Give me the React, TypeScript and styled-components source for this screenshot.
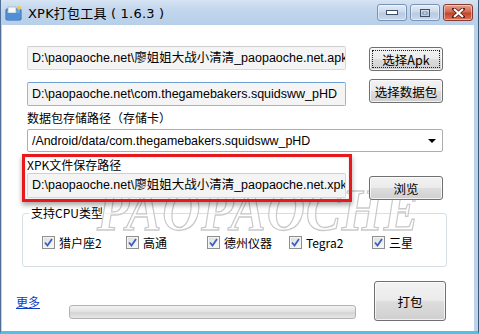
import React from "react";
import styled, { createGlobalStyle } from "styled-components";

const Global = createGlobalStyle`
  html, body { margin: 0; padding: 0; background: #fff; }
  body { width: 479px; height: 334px; overflow: hidden; }
  * { box-sizing: border-box; }
`;

const UI = `"Liberation Sans", "Noto Sans CJK SC", sans-serif`;

const Window = styled.div`
  position: relative;
  width: 479px;
  height: 334px;
  display: flex;
  flex-direction: column;
  background: linear-gradient(#c9dcf0, #b9d1ea 25px, #bcd3ea);
  border-left: 1px solid #4f6f96;
  border-right: 1px solid #3b5878;
  border-bottom: 3px solid #4cc3e6;
  font-family: ${UI};
  color: #000;
`;

const TitleBar = styled.div`
  height: 25px;
  display: flex;
  align-items: center;
  padding: 0 5px 0 4px;
  background: linear-gradient(#d6e4f3, #c2d6ec 40%, #b7cfe9);
`;

const TitleText = styled.span`
  font-family: "DejaVu Sans", "Noto Sans CJK SC", sans-serif;
  font-size: 13px;
  margin-left: 5px;
  flex: 1;
  letter-spacing: 0.2px;
`;

const Caption = styled.div`
  display: flex;
  gap: 3px;
`;

const CapBtn = styled.div<{ $close?: boolean }>`
  width: 30px;
  height: 17px;
  border-radius: 3px;
  border: 1px solid ${(p) => (p.$close ? "#8a3a2e" : "#7a93b3")};
  background: ${(p) =>
    p.$close
      ? "linear-gradient(#e6a08e, #d36a52 45%, #c3452c 55%, #d8745a)"
      : "linear-gradient(#e4edf7, #cad9ec 45%, #b8cbe3 55%, #c8d8ec)"};
  display: flex;
  align-items: center;
  justify-content: center;
  box-shadow: inset 0 0 0 1px rgba(255, 255, 255, 0.45);
`;

const Body = styled.div`
  position: relative;
  flex: 1;
  margin: 0 4px 0 1px;
  background: #fff;
  padding: 21px 0 0 25px;
  display: flex;
  flex-direction: column;
`;

const Row = styled.div<{ $mt?: number }>`
  display: flex;
  align-items: flex-start;
  margin-top: ${(p) => p.$mt ?? 0}px;
`;

const Field = styled.div<{ $hover?: boolean; $h?: number; $mt?: number }>`
  width: 319px;
  height: ${(p) => p.$h ?? 24}px;
  margin-top: ${(p) => p.$mt ?? 0}px;
  border: 1px solid ${(p) => (p.$hover ? "#8fb9e3" : "#d9d9d9")};
  border-top-color: ${(p) => (p.$hover ? "#6fa0d6" : "#cfcfcf")};
  background: #f4f4f4;
  border-radius: 2px;
  font-size: 12.5px;
  line-height: ${(p) => (p.$h ?? 24) - 2}px;
  padding-left: 4px;
  white-space: nowrap;
  overflow: hidden;
  color: #000;
`;

const Button = styled.div<{ $focus?: boolean; $w?: number; $h?: number; $ml?: number; $mt?: number; $mb?: number }>`
  position: relative;
  width: ${(p) => p.$w ?? 74}px;
  height: ${(p) => p.$h ?? 24}px;
  margin-left: ${(p) => p.$ml ?? 23}px;
  margin-top: ${(p) => p.$mt ?? 0}px;
  margin-bottom: ${(p) => p.$mb ?? 0}px;
  border: 1px solid #707070;
  border-radius: 3px;
  background: linear-gradient(#f2f2f2, #ebebeb 48%, #dddddd 52%, #cfcfcf);
  box-shadow: inset 0 0 0 1px rgba(255, 255, 255, 0.7);
  display: flex;
  align-items: center;
  justify-content: center;
  font-family: "Noto Sans CJK SC", "Liberation Sans", sans-serif;
  font-size: 12.5px;
  &::after {
    content: "";
    display: ${(p) => (p.$focus ? "block" : "none")};
    position: absolute;
    inset: 2px;
    border: 1px dotted #222;
  }
`;

const Label = styled.div<{ $mt?: number }>`
  font-family: "Noto Sans CJK SC", sans-serif;
  font-size: 12px;
  line-height: 14px;
  margin-top: ${(p) => p.$mt ?? 0}px;
`;

const Combo = styled.div`
  width: 416px;
  height: 23px;
  margin-top: 4px;
  border: 1px solid #abadb3;
  border-radius: 2px;
  background: #fff;
  display: flex;
  align-items: center;
  padding: 0 6px 0 4px;
  font-size: 12.4px;
`;

const ComboText = styled.span`
  flex: 1;
  white-space: nowrap;
`;

const Arrow = styled.span`
  width: 0;
  height: 0;
  border-left: 4px solid transparent;
  border-right: 4px solid transparent;
  border-top: 4px solid #000;
`;

const Marked = styled.div`
  position: relative;
  margin-top: 4px;
`;

const RedFrame = styled.div`
  position: absolute;
  left: -5px;
  top: -2px;
  width: 330px;
  height: 48px;
  border: 3px solid #e8191c;
  box-shadow: 0 3px 5px rgba(0, 0, 0, 0.35), inset 0 0 2px rgba(0, 0, 0, 0.2);
  pointer-events: none;
`;

const Group = styled.fieldset`
  width: 425px;
  height: 61px;
  margin: 6px 0 0 -5px;
  padding: 0;
  border: 1px solid #d5dfe5;
  border-radius: 3px;
`;

const Legend = styled.legend`
  font-family: "Noto Sans CJK SC", sans-serif;
  font-size: 12px;
  line-height: 14px;
  padding: 0 2px;
  margin-left: 6px;
`;

const CheckRow = styled.div`
  display: flex;
  align-items: center;
  padding: 14px 0 0 19px;
`;

const Check = styled.label<{ $w: number }>`
  width: ${(p) => p.$w}px;
  flex: none;
  display: flex;
  align-items: center;
  gap: 4px;
  font-family: "Noto Sans CJK SC", "Liberation Sans", sans-serif;
  font-size: 12px;
  line-height: 17px;
  white-space: nowrap;
`;

const Box = styled.span`
  width: 13px;
  height: 13px;
  flex: none;
  border: 1px solid #8e8f8f;
  background: linear-gradient(135deg, #dcdcdc, #fbfbfb);
  display: flex;
  align-items: center;
  justify-content: center;
  box-shadow: inset 0 0 0 1px #f4f4f4;
`;

const Footer = styled.div`
  display: flex;
  align-items: flex-end;
  margin-top: 14px;
  margin-left: -11px;
`;

const MoreLink = styled.a`
  font-family: "Noto Sans CJK SC", sans-serif;
  font-size: 12px;
  color: #0b3cc4;
  text-decoration: underline;
  margin-bottom: 20px;
  width: 53px;
`;

const Progress = styled.div`
  width: 287px;
  height: 14px;
  margin-bottom: 11px;
  border: 1px solid #b2b2b2;
  border-radius: 3px;
  background: linear-gradient(#f3f3f3, #e0e0e0 50%, #d4d4d4 55%, #e6e6e6);
`;

const Watermark = styled.div`
  position: absolute;
  left: 95px;
  top: 155px;
  font-family: "Liberation Serif", serif;
  font-style: italic;
  font-weight: bold;
  font-size: 60px;
  line-height: 1;
  letter-spacing: 1px;
  color: rgba(255, 255, 255, 0.55);
  -webkit-text-stroke: 1.3px #c9c9c9;
  transform: scaleX(0.88);
  transform-origin: left top;
  pointer-events: none;
  white-space: nowrap;
`;

const Tick = () => (
  <svg width="9" height="9" viewBox="0 0 9 9">
    <path d="M1 4.5 L3.5 7.5 L8 1" fill="none" stroke="#3a5fc4" strokeWidth="1.8" />
  </svg>
);

const AppIcon = () => (
  <svg width="18" height="16" viewBox="0 0 18 16">
    <rect x="1" y="4" width="15" height="11" rx="1" fill="#6aa3de" stroke="#2e64a8" />
    <rect x="3" y="2" width="8" height="6" fill="#f4f7fb" stroke="#8aa" strokeWidth="0.6" />
    <path d="M1 8 L16 8 L15 15 L2 15 Z" fill="#4f8fd6" />
    <circle cx="14" cy="3" r="2" fill="#f2c94c" />
  </svg>
);

const cpus: [string, number][] = [
  ["猎户座2", 84],
  ["高通", 81],
  ["德州仪器", 82],
  ["Tegra2", 83],
  ["三星", 60],
];

export default function App() {
  return (
    <>
      <Global />
      <Window>
        <TitleBar>
          <AppIcon />
          <TitleText>XPK打包工具 ( 1.6.3 )</TitleText>
          <Caption>
            <CapBtn>
              <svg width="12" height="5"><rect x="0.5" y="0.5" width="11" height="4" fill="#fff" stroke="#3c4f66" /></svg>
            </CapBtn>
            <CapBtn>
              <svg width="10" height="8"><rect x="0.5" y="0.5" width="9" height="7" fill="none" stroke="#3c4f66" /><rect x="3" y="3" width="4" height="2" fill="#fff" stroke="#3c4f66" strokeWidth="0.6" /></svg>
            </CapBtn>
            <CapBtn $close>
              <svg width="13" height="10" viewBox="0 0 13 10">
                <path d="M2 1 L11 9 M11 1 L2 9" stroke="#5a1a10" strokeWidth="3.6" strokeLinecap="square" />
                <path d="M2 1 L11 9 M11 1 L2 9" stroke="#fff" strokeWidth="2.2" />
              </svg>
            </CapBtn>
          </Caption>
        </TitleBar>
        <Body>
          <Row>
            <Field>D:\paopaoche.net\廖姐姐大战小清清_paopaoche.net.apk</Field>
            <Button $focus $mt={1}>选择Apk</Button>
          </Row>
          <Row $mt={8}>
            <Field $hover $h={24} $mt={3}>D:\paopaoche.net\com.thegamebakers.squidsww_pHD</Field>
            <Button>选择数据包</Button>
          </Row>
          <Label $mt={5}>数据包存储路径（存储卡）</Label>
          <Combo>
            <ComboText>/Android/data/com.thegamebakers.squidsww_pHD</ComboText>
            <Arrow />
          </Combo>
          <Watermark>PAOPAOCHE</Watermark>
          <Marked>
            <Label $mt={2}>XPK文件保存路径</Label>
            <Row>
              <Field $mt={1} $h={25}>D:\paopaoche.net\廖姐姐大战小清清_paopaoche.net.xpk</Field>
              <Button $mt={4}>浏览</Button>
            </Row>
            <RedFrame />
          </Marked>
          <Group>
            <Legend>支持CPU类型</Legend>
            <CheckRow>
              {cpus.map(([name, w]) => (
                <Check key={name} $w={w}>
                  <Box>
                    <Tick />
                  </Box>
                  {name}
                </Check>
              ))}
            </CheckRow>
          </Group>
          <Footer>
            <MoreLink>更多</MoreLink>
            <Progress />
            <Button $w={72} $h={40} $ml={18} $mb={9}>打包</Button>
          </Footer>
        </Body>
      </Window>
    </>
  );
}
